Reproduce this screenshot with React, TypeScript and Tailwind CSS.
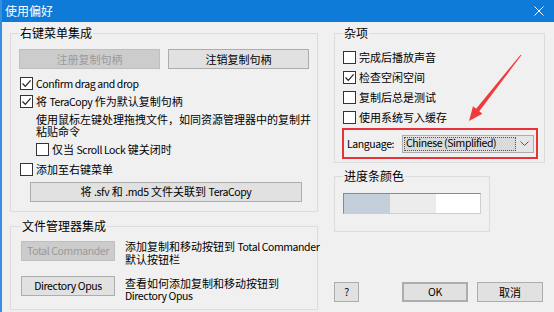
import React from 'react'

// Windows-style "使用偏好" preferences dialog (TeraCopy)

// Latin runs: slightly smaller and tighter so they keep the Segoe-ish widths of the original
function L({ children }: { children: React.ReactNode }) {
  return <span className="text-[10.5px] tracking-[-0.4px]">{children}</span>
}

function Check({ checked, label }: { checked?: boolean; label: React.ReactNode }) {
  return (
    <div className="flex items-center gap-[3px] h-[18px] whitespace-nowrap">
      <span className="flex items-center justify-center size-[13px] border border-[#333] bg-white shrink-0">
        {checked && (
          <svg width="11" height="11" viewBox="0 0 11 11" fill="none">
            <path d="M1.5 5.5 L4.3 8.3 L9.6 2.4" stroke="#222" strokeWidth="1.2" />
          </svg>
        )}
      </span>
      <span className="leading-[14px]">{label}</span>
    </div>
  )
}

function Btn({
  children,
  disabled,
  className = '',
}: {
  children: React.ReactNode
  disabled?: boolean
  className?: string
}) {
  return (
    <div
      className={`flex items-center justify-center h-[20px] border leading-none whitespace-nowrap ${
        disabled ? 'bg-[#cccccc] border-[#bfbfbf] text-[#9a9a9a]' : 'bg-[#e1e1e1] border-[#adadad] text-black'
      } ${className}`}
    >
      {children}
    </div>
  )
}

function Group({
  title,
  children,
  className = '',
}: {
  title: string
  children: React.ReactNode
  className?: string
}) {
  return (
    <fieldset className={`min-w-0 border border-[#dcdcdc] px-[8px] ${className}`}>
      <legend className="px-[1px] leading-[14px] text-[12px]">{title}</legend>
      {children}
    </fieldset>
  )
}

export default function App() {
  return (
    <div className="relative w-[554px] h-[312px] bg-[#f0f0f0] border-l-2 border-[#3a8ee0] flex flex-col overflow-hidden text-[11px] text-black font-['Noto_Sans_CJK_SC','Liberation_Sans',sans-serif]">
      {/* Title bar */}
      <div className="h-[22px] bg-[#0f7bd8] flex items-center justify-between pl-[3px] pr-[10px] text-white text-[12px] shrink-0">
        <span>使用偏好</span>
        <svg width="10" height="10" viewBox="0 0 10 10">
          <path d="M0.5 0.5 L9.5 9.5 M9.5 0.5 L0.5 9.5" stroke="#fff" strokeWidth="1" />
        </svg>
      </div>

      <div className="flex flex-1 min-h-0 pl-[8px] pt-[4px]">
        {/* Left column */}
        <div className="w-[308px] shrink-0 flex flex-col">
          <Group title="右键菜单集成" className="pb-[9px]">
            <div className="flex gap-[8px] pt-[9px]">
              <Btn disabled className="flex-1">注册复制句柄</Btn>
              <Btn className="flex-1">注销复制句柄</Btn>
            </div>
            <div className="mt-[5px] pl-[1px]">
              <Check checked label={<L>Confirm drag and drop</L>} />
              <Check checked label={<>将 <L>TeraCopy</L> 作为默认复制句柄</>} />
            </div>
            <div className="mt-[3px] pl-[17px] leading-[12px] whitespace-nowrap">
              使用鼠标左键处理拖拽文件，如同资源管理器中的复制并
              <br />
              粘贴命令
            </div>
            <div className="mt-[3px] pl-[17px]">
              <Check label={<>仅当 <L>Scroll Lock</L> 键关闭时</>} />
            </div>
            <div className="mt-[2px] pl-[1px]">
              <Check label="添加至右键菜单" />
            </div>
            <Btn className="mt-[4px] ml-[11px] w-[272px]">
              <span>将 <L>.sfv</L> 和 <L>.md5</L> 文件关联到 <L>TeraCopy</L></span>
            </Btn>
          </Group>

          <Group title="文件管理器集成" className="mt-[7px] pb-[7px] pl-[10px]">
            <div className="flex gap-[10px] pt-[8px]">
              <Btn disabled className="w-[94px] shrink-0"><L>Total Commander</L></Btn>
              <div className="leading-[13px] -mt-[1px] whitespace-nowrap">
                添加复制和移动按钮到 <L>Total Commander</L>
                <br />
                默认按钮栏
              </div>
            </div>
            <div className="flex gap-[10px] mt-[10px]">
              <Btn className="w-[94px] shrink-0"><L>Directory Opus</L></Btn>
              <div className="leading-[12px] mt-[1px] whitespace-nowrap">
                查看如何添加复制和移动按钮到
                <br />
                <L>Directory Opus</L>
              </div>
            </div>
          </Group>
        </div>

        {/* Right column */}
        <div className="w-[211px] shrink-0 ml-[16px] flex flex-col pb-[10px]">
          <Group title="杂项" className="pb-[3px]">
            <div className="pt-[7px] flex flex-col">
              <div className="h-[20px] flex items-center"><Check label="完成后播放声音" /></div>
              <div className="h-[20px] flex items-center"><Check checked label="检查空闲空间" /></div>
              <div className="h-[20px] flex items-center"><Check label="复制后总是测试" /></div>
              <div className="h-[20px] flex items-center"><Check label="使用系统写入缓存" /></div>
            </div>
            <div className="-ml-[1px] mt-[1px] w-[196px] h-[31px] border-2 border-[#e8323a] flex items-center pl-[3px] pr-[2px] whitespace-nowrap">
              <span className="w-[55px]"><L>Language:</L></span>
              <div className="flex-1 h-[18px] border border-[#acacac] bg-[#e5e5e5] flex items-center pl-[1px]">
                <span className="flex-1 h-[14px] flex items-center border border-dotted border-[#555] bg-[#dadada] pl-[1px] leading-none">
                  <L>Chinese (Simplified)</L>
                </span>
                <span className="w-[17px] flex items-center justify-center">
                  <svg width="9" height="5" viewBox="0 0 9 5" fill="none">
                    <path d="M0.5 0.5 L4.5 4.5 L8.5 0.5" stroke="#555" strokeWidth="1" />
                  </svg>
                </span>
              </div>
            </div>
          </Group>

          <Group title="进度条颜色" className="mt-[6px] w-[156px] pb-[17px]">
            <div className="pt-[10px]">
              <div className="flex w-[138px] h-[21px] border border-t-[#8a8a8a] border-l-[#8a8a8a] border-b-[#cfcfcf] border-r-[#cfcfcf]">
                <div className="w-[46px] bg-[#c3cfdb]" />
                <div className="w-[46px] bg-[#ececec]" />
                <div className="flex-1 bg-white" />
              </div>
            </div>
          </Group>

          <div className="mt-auto flex items-center">
            <Btn className="w-[25px]"><L>?</L></Btn>
            <Btn className="w-[66px] ml-[43px] border-[#0078d7] border-2"><L>OK</L></Btn>
            <Btn className="w-[66px] ml-[9px]">取消</Btn>
          </div>
        </div>
      </div>

      {/* Red annotation arrow */}
      <svg className="absolute inset-0 pointer-events-none" width="554" height="312" viewBox="0 0 554 312">
        <polygon
          points="519.4,55.3 477.3,111.2 480.4,113.7 467,121 471,106.3 474.1,108.8 518.6,54.7"
          fill="#ef3b3b"
        />
      </svg>
    </div>
  )
}
